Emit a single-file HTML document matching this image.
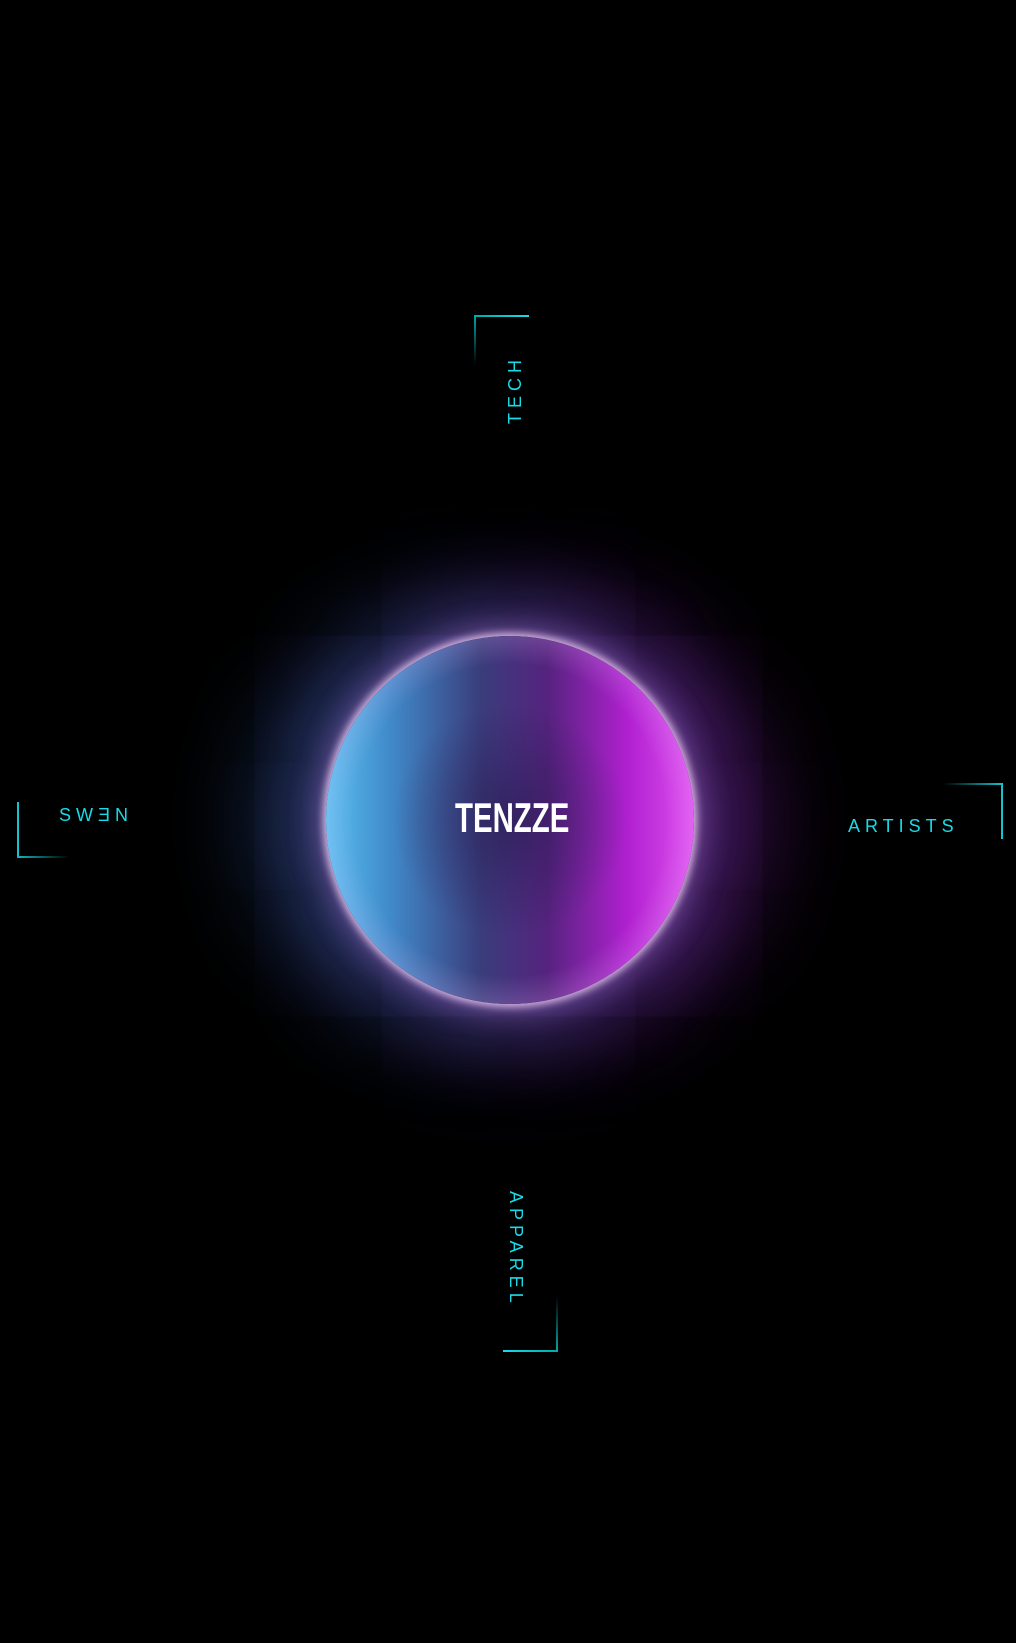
<!DOCTYPE html>
<html><head><meta charset="utf-8"><style>
html,body{margin:0;padding:0;background:#000;width:1016px;height:1643px;overflow:hidden;position:relative;font-family:"Liberation Sans",sans-serif}
.c{color:#19dbe8;position:absolute;font-size:18px;letter-spacing:5px;white-space:nowrap;line-height:18px}
.orb{position:absolute;left:326px;top:636px;width:368px;height:368px;border-radius:50%;
background:radial-gradient(circle at 50% 50%,rgba(40,25,80,.6) 0%,rgba(40,25,80,0) 45%),
radial-gradient(circle,rgba(255,255,255,0) 60%,rgba(235,190,255,.5) 90%,rgba(255,230,255,.85) 100%),
linear-gradient(to right,#58c0f0 0%,#4088c8 18%,#3a3d7c 42%,#55237e 60%,#b020d0 82%,#e050f0 100%);
box-shadow:0 0 8px 3px rgba(255,220,255,.75),0 0 30px 8px rgba(220,150,255,.35),
-40px 0 90px 30px rgba(60,130,210,.35),40px 0 90px 30px rgba(150,40,190,.4),0 0 180px 50px rgba(70,40,130,.25);}
.logo{position:absolute;left:455px;top:799px;color:#fff;font-weight:bold;font-size:42px;line-height:38px;font-family:"Liberation Sans Narrow","Liberation Sans",sans-serif;transform:scaleX(.7);transform-origin:left top;letter-spacing:0}
.l{position:absolute}
</style></head><body>
<div class="orb"></div>
<div class="logo">TENZZE</div>

<!-- TECH -->
<div class="l" style="left:474px;top:315px;width:55px;height:2px;background:linear-gradient(to right,#0aa,#19dbe8)"></div>
<div class="l" style="left:474px;top:315px;width:2px;height:50px;background:linear-gradient(to bottom,#0aa,rgba(0,170,170,0))"></div>
<div class="c" style="left:506px;top:424px;transform:rotate(-90deg);transform-origin:left top">TECH</div>

<!-- NEWS -->
<div class="l" style="left:17px;top:802px;width:2px;height:56px;background:#13c3cf"></div>
<div class="l" style="left:17px;top:856px;width:52px;height:2px;background:linear-gradient(to right,#13b8c4,rgba(0,150,160,0))"></div>
<div class="c" style="left:59px;top:806px;">SWƎN</div>

<!-- ARTISTS -->
<div class="l" style="left:943px;top:783px;width:60px;height:2px;background:linear-gradient(to right,rgba(0,150,160,0),#13c3cf)"></div>
<div class="l" style="left:1001px;top:783px;width:2px;height:56px;background:#13c3cf"></div>
<div class="c" style="left:848px;top:817px">ARTISTS</div>

<!-- APPAREL -->
<div class="c" style="left:525px;top:1191px;transform:rotate(90deg);transform-origin:left top">APPAREL</div>
<div class="l" style="left:503px;top:1350px;width:55px;height:2px;background:linear-gradient(to right,#19dbe8,#0aa)"></div>
<div class="l" style="left:556px;top:1296px;width:2px;height:56px;background:linear-gradient(to top,#0aa,rgba(0,170,170,0))"></div>
</body></html>
